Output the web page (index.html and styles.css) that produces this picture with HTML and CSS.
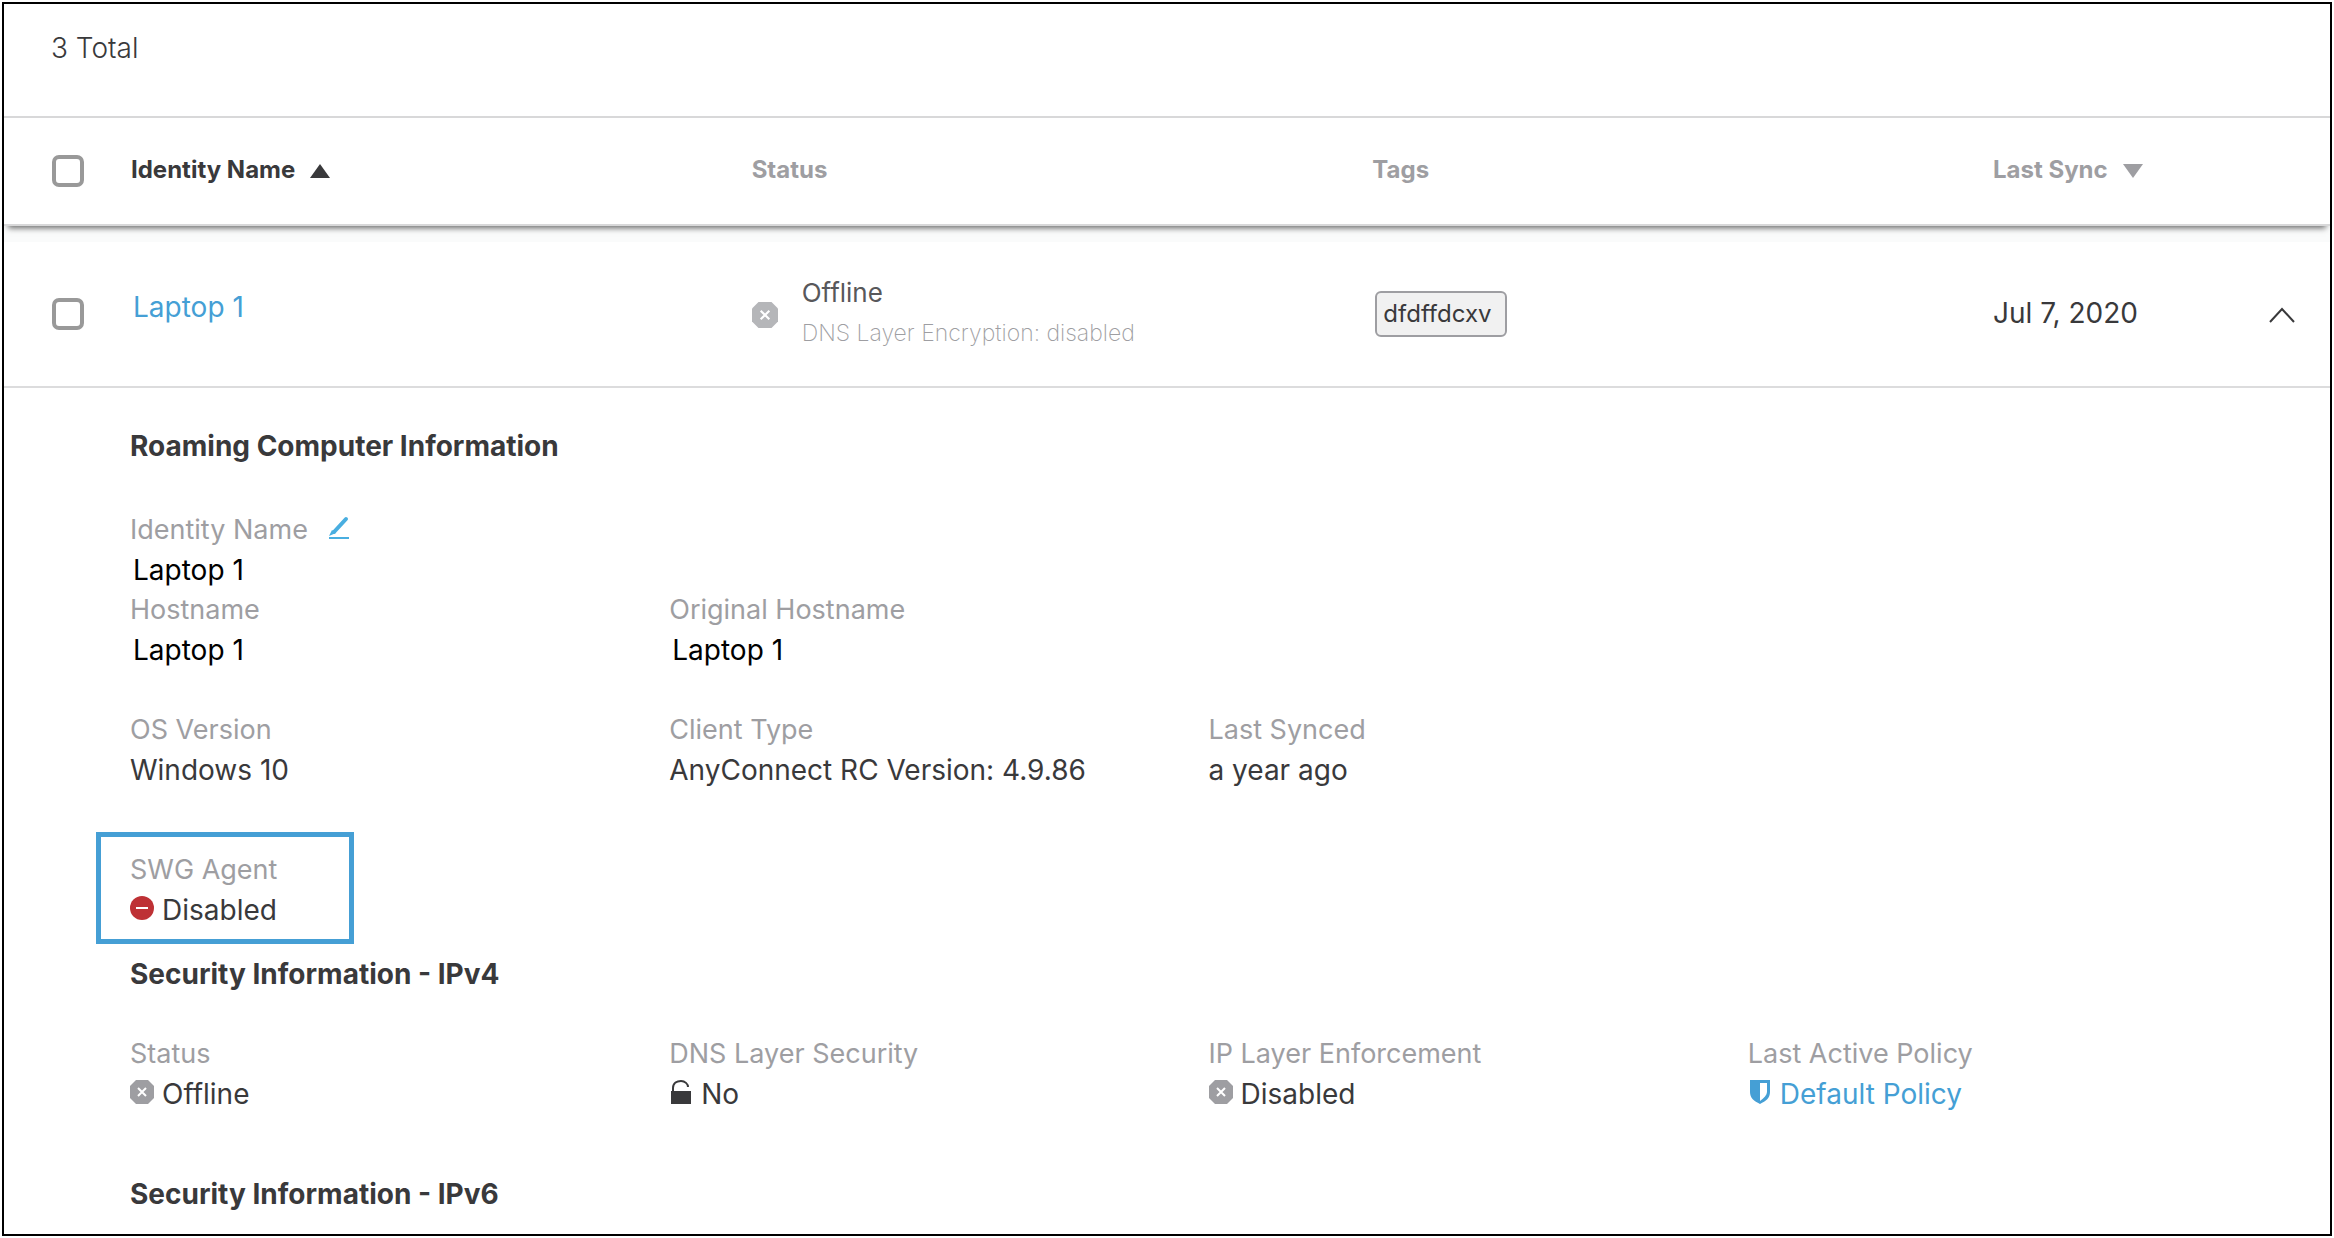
FILE: index.html
```html
<!DOCTYPE html>
<html lang="en">
<head>
<meta charset="utf-8">
<title>Roaming Computers</title>
<link rel="stylesheet" href="styles.css">
</head>
<body>
<svg class="defs" aria-hidden="true">
  <symbol id="octagon" viewBox="0 0 24 24">
    <path d="M6 0h12l6 6v12l-6 6H6l-6-6V6z" fill="currentColor"/>
    <path d="M8 8l8 8M16 8l-8 8" stroke="#fff" stroke-width="2"/>
  </symbol>
</svg>
<main class="panel">
  <p class="total">3 Total</p>
  <table class="identities">
    <colgroup>
      <col class="col-check"><col><col><col><col class="col-sync"><col class="col-toggle">
    </colgroup>
    <thead>
      <tr>
        <th class="check"><input type="checkbox" aria-label="Select all"></th>
        <th class="sorted"><button class="sort" type="button">Identity Name
          <svg class="arrow" viewBox="0 0 20 14" aria-hidden="true"><path d="M10 0l10 14H0z" fill="currentColor"/></svg></button></th>
        <th>Status</th>
        <th>Tags</th>
        <th><button class="sort" type="button">Last Sync
          <svg class="arrow" viewBox="0 0 20 14" aria-hidden="true"><path d="M0 0h20L10 14z" fill="currentColor"/></svg></button></th>
        <th></th>
      </tr>
    </thead>
    <tbody>
      <tr class="identity">
        <td class="check"><input type="checkbox" aria-label="Select Laptop 1"></td>
        <td class="name"><a href="#details">Laptop 1</a></td>
        <td>
          <div class="status">
            <svg class="status-icon" aria-hidden="true"><use href="#octagon"/></svg>
            <div>
              <div class="state">Offline</div>
              <div class="note">DNS Layer Encryption: disabled</div>
            </div>
          </div>
        </td>
        <td class="tags"><span class="tag">dfdffdcxv</span></td>
        <td>Jul 7, 2020</td>
        <td><button class="collapse" type="button" aria-label="Collapse details">
          <svg viewBox="0 0 28 16" aria-hidden="true"><path d="M2 15L14 2l12 13" fill="none" stroke="currentColor" stroke-width="2"/></svg></button></td>
      </tr>
      <tr>
        <td class="details" id="details" colspan="6">
          <h2 class="first">Roaming Computer Information</h2>
          <dl class="fields">
            <div>
              <dt>Identity Name <button class="edit" type="button" aria-label="Edit identity name"><svg viewBox="0 0 20 24" aria-hidden="true"><path d="M17 3L5 16" fill="none" stroke="currentColor" stroke-width="4" stroke-linecap="round"/><path d="M3 14l4 3-7 3z" fill="currentColor"/><path d="M0 22h20" stroke="currentColor" stroke-width="2"/></svg></button></dt>
              <dd class="host">Laptop 1</dd>
            </div>
          </dl>
          <dl class="fields gap-medium">
            <div><dt>Hostname</dt><dd class="host">Laptop 1</dd></div>
            <div><dt>Original Hostname</dt><dd class="host">Laptop 1</dd></div>
          </dl>
          <dl class="fields gap-large">
            <div><dt>OS Version</dt><dd>Windows 10</dd></div>
            <div><dt>Client Type</dt><dd>AnyConnect RC Version: 4.9.86</dd></div>
            <div><dt>Last Synced</dt><dd>a year ago</dd></div>
          </dl>
          <dl class="fields gap-small">
            <div class="callout">
              <dt>SWG Agent</dt>
              <dd><svg class="icon danger" viewBox="0 0 24 24" aria-hidden="true"><circle cx="12" cy="12" r="12" fill="currentColor"/><path d="M6 12h12" stroke="#fff" stroke-width="2"/></svg>Disabled</dd>
            </div>
          </dl>
          <h2>Security Information - IPv4</h2>
          <dl class="fields gap-large">
            <div><dt>Status</dt><dd><svg class="icon muted" aria-hidden="true"><use href="#octagon"/></svg>Offline</dd></div>
            <div><dt>DNS Layer Security</dt><dd><svg class="icon" viewBox="0 0 24 24" aria-hidden="true"><path d="M2 11h20v13H2z" fill="currentColor"/><path d="M4 12V8C4 3 8 1 12 1s7 3 7 6" fill="none" stroke="currentColor" stroke-width="2"/></svg>No</dd></div>
            <div><dt>IP Layer Enforcement</dt><dd><svg class="icon muted" aria-hidden="true"><use href="#octagon"/></svg>Disabled</dd></div>
            <div><dt>Last Active Policy</dt><dd><a href="#policy"><svg class="icon" viewBox="0 0 24 24" aria-hidden="true"><path fill-rule="evenodd" d="M2 0h20v12c0 6-4 9-10 12C6 21 2 18 2 12zM12 3v18c4-3 7-6 7-9V3z" fill="currentColor"/></svg>Default Policy</a></dd></div>
          </dl>
          <h2 class="last">Security Information - IPv6</h2>
        </td>
      </tr>
    </tbody>
  </table>
</main>
</body>
</html>
```
FILE: styles.css
```css
*, ::after {
  box-sizing: border-box;
}

body {
  margin: 0;
  padding: 2px;
  background: #fff;
  color: #39393b;
  font-family: Inter, "Liberation Sans", sans-serif;
  font-size: 28px;
  line-height: 40px;
}

h2, p, dl, dd {
  margin: 0;
}

a {
  color: #459fd5;
  text-decoration: none;
}

button {
  padding: 0;
  border: 0;
  background: none;
  color: inherit;
  font: inherit;
  cursor: pointer;
}

svg {
  display: block;
}

.defs {
  position: absolute;
  width: 0;
  height: 0;
}

.panel {
  border: 2px solid #000;
  background: #fff;
}

.total {
  padding: 24px 47px 48px;
  font-weight: 300;
}

.identities {
  width: 100%;
  border-spacing: 0;
  table-layout: fixed;
}

.col-check {
  width: 127px;
}

.col-sync {
  width: 275px;
}

.col-toggle {
  width: 62px;
}

th, td {
  padding: 0;
  text-align: left;
}

thead {
  position: relative;
  z-index: 1;
  box-shadow: 0 6px 6px -4px rgba(0, 0, 0, 0.6);
}

th {
  height: 110px;
  padding-bottom: 2px;
  border-top: 2px solid #d8d8d9;
  border-bottom: 2px solid #d8d8d9;
  background: #fff;
  color: #9e9ea2;
  font-size: 24px;
  font-weight: 700;
}

.sorted {
  color: #39393b;
}

.sort {
  display: flex;
  align-items: center;
  gap: 15px;
}

.arrow {
  width: 20px;
  height: 14px;
  margin-top: 2px;
}

.check {
  padding: 0 0 0 48px;
}

input[type="checkbox"] {
  display: block;
  width: 32px;
  height: 32px;
  margin: 0;
  border: 4px solid #999;
  border-radius: 7px;
  background: #fff;
  appearance: none;
}

.identity td {
  height: 162px;
  padding-bottom: 3px;
  border-top: 16px solid #fafbfb;
  border-bottom: 2px solid #dcdcdd;
}

.identity .check, .identity .tags {
  padding-bottom: 0;
}

.identity .name {
  padding-bottom: 14px;
  padding-left: 2px;
}

.status {
  display: flex;
  align-items: center;
  gap: 24px;
}

.status-icon {
  width: 26px;
  height: 26px;
  margin-top: 4px;
  color: #b5b6b9;
}

.state {
  color: #58585b;
  font-size: 26px;
}

.note {
  color: #9e9ea2;
  font-size: 23px;
  font-weight: 200;
}

.tag {
  display: inline-block;
  margin-left: 3px;
  padding: 1px 14px 1px 6px;
  border: 2px solid #9e9ea2;
  border-radius: 6px;
  background: #f1f1f1;
  font-size: 24px;
}

.collapse svg {
  width: 28px;
  height: 16px;
}

.details {
  padding: 38px 43px 20px 126px;
}

h2 {
  margin-bottom: 40px;
  font-size: 28px;
  font-weight: 700;
  line-height: 40px;
}

h2.first {
  margin-bottom: 44px;
}

h2.last {
  margin-bottom: 0;
}

.fields {
  display: grid;
  grid-template-columns: repeat(4, 1fr);
}

.gap-small {
  margin-bottom: 24px;
}

.gap-medium {
  margin-bottom: 40px;
}

.gap-large {
  margin-bottom: 60px;
}

dt {
  display: flex;
  color: #9e9ea2;
  font-size: 27px;
}

dd, dd a {
  display: flex;
}

.host {
  padding-left: 3px;
  color: #000;
}

.edit {
  height: 36px;
  margin-left: 21px;
  color: #49aee0;
}

.edit svg {
  width: 20px;
  height: 24px;
}

.icon {
  flex: none;
  width: 24px;
  height: 24px;
  margin: 6px 8px 0 0;
}

.danger {
  color: #be3135;
}

.muted {
  color: #9e9ea2;
}

.callout {
  position: relative;
}

.callout::after {
  content: "";
  position: absolute;
  top: -18px;
  bottom: -14px;
  left: -34px;
  width: 258px;
  border: 5px solid #459fd5;
}
```
